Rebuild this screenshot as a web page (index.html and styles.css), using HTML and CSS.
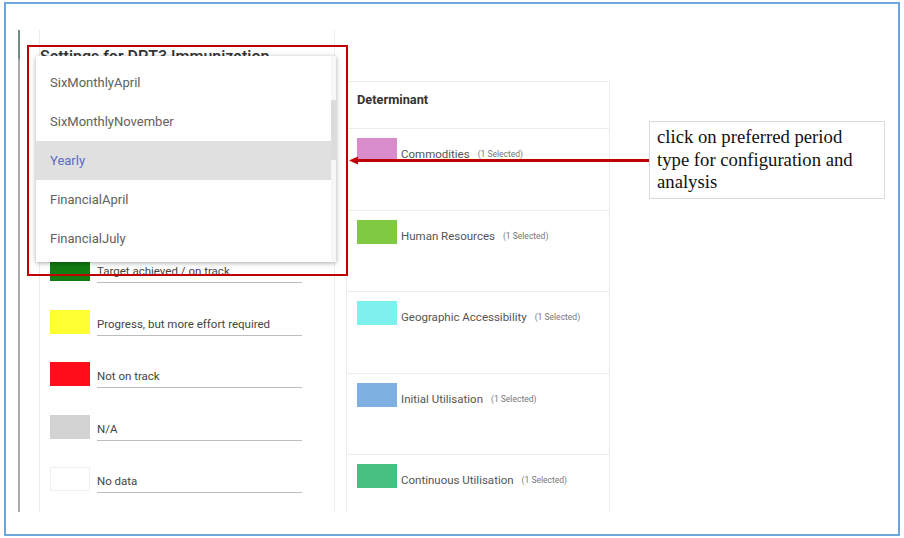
FILE: index.html
```html
<!DOCTYPE html>
<html lang="en">
<head>
<meta charset="utf-8">
<title>Period type selection</title>
<link rel="stylesheet" href="styles.css">
</head>
<body>
<div class="frame">
  <div class="screen">
    <div class="edge"></div>
    <div class="card">
      <h2 class="title">Settings for DPT3 Immunization</h2>
      <div class="legend">
        <div class="legend-row"><span class="swatch sw-green"></span><span class="legend-label">Target achieved / on track</span></div>
        <div class="legend-row"><span class="swatch sw-yellow"></span><span class="legend-label">Progress, but more effort required</span></div>
        <div class="legend-row"><span class="swatch sw-red"></span><span class="legend-label">Not on track</span></div>
        <div class="legend-row"><span class="swatch sw-gray"></span><span class="legend-label">N/A</span></div>
        <div class="legend-row"><span class="swatch sw-white"></span><span class="legend-label">No data</span></div>
      </div>
    </div>
    <div class="table">
      <div class="thead">Determinant</div>
      <div class="trow"><div class="cell"><span class="swatch sw-pink"></span><span class="det-label">Commodities</span><span class="sel">(1 Selected)</span></div></div>
      <div class="trow"><div class="cell"><span class="swatch sw-lime"></span><span class="det-label">Human Resources</span><span class="sel">(1 Selected)</span></div></div>
      <div class="trow"><div class="cell"><span class="swatch sw-cyan"></span><span class="det-label">Geographic Accessibility</span><span class="sel">(1 Selected)</span></div></div>
      <div class="trow"><div class="cell"><span class="swatch sw-blue"></span><span class="det-label">Initial Utilisation</span><span class="sel">(1 Selected)</span></div></div>
      <div class="trow"><div class="cell"><span class="swatch sw-teal"></span><span class="det-label">Continuous Utilisation</span><span class="sel">(1 Selected)</span></div></div>
    </div>
  </div>

  <div class="menu">
    <ul class="menu-list">
      <li class="menu-item">SixMonthlyApril</li>
      <li class="menu-item">SixMonthlyNovember</li>
      <li class="menu-item is-active">Yearly</li>
      <li class="menu-item">FinancialApril</li>
      <li class="menu-item">FinancialJuly</li>
    </ul>
    <div class="scroll-track"><div class="scroll-thumb"></div></div>
  </div>

  <div class="redbox"></div>

  <svg class="arrow" width="302" height="10" viewBox="0 0 302 10">
    <line x1="8" y1="4.5" x2="302" y2="4.5" stroke="#c00000" stroke-width="3"/>
    <polygon points="0,4.5 9,0.5 9,8.5" fill="#c00000"/>
  </svg>

  <div class="callout">click on preferred period<br>type for configuration and<br>analysis</div>
</div>
</body>
</html>
```
FILE: styles.css
```css
* { box-sizing: border-box; }
html, body { margin: 0; padding: 0; background: #fff; }
body { font-family: Roboto, "Noto Sans", sans-serif; }

.frame {
  position: relative;
  margin: 2px 0 0 4px;
  width: 896px;
  height: 534px;
  border: 2px solid #6fa6db;
  overflow: hidden;
}

.screen {
  display: flex;
  align-items: flex-start;
  margin: 26px 0 0 12px;
  height: 482px;
}

.edge {
  width: 2px;
  height: 482px;
  background: linear-gradient(#6e8f7c 0, #6e8f7c 28px, #aaa 30px, #aaa 100%);
}

.card {
  margin-left: 19px;
  width: 296px;
  height: 482px;
  border-left: 1px solid #ececec;
  border-right: 1px solid #ececec;
  padding: 17px 0 0 0;
}

.title {
  margin: 0;
  font-size: 16px;
  line-height: 20px;
  font-weight: 500;
  color: #333;
  white-space: nowrap;
}

.legend { margin-top: 190px; padding-left: 10px; }

.legend-row {
  display: flex;
  align-items: flex-start;
  gap: 7px;
  height: 52.5px;
}

.swatch {
  display: block;
  flex: none;
  width: 40px;
  height: 24px;
}

.legend-label {
  width: 205px;
  padding: 6px 0 3px;
  line-height: 16px;
  font-size: 11.5px;
  color: #444;
  border-bottom: 1px solid #bdbdbd;
  white-space: nowrap;
}

.sw-green { background: #107c12; }
.sw-yellow { background: #ffff33; }
.sw-red { background: #ff0d1a; }
.sw-gray { background: #d3d3d3; }
.sw-white { background: #fff; border: 1px solid #efefef; }
.sw-pink { background: #d98ccb; }
.sw-lime { background: #80c942; }
.sw-cyan { background: #7ef0ee; }
.sw-blue { background: #7fb0e2; }
.sw-teal { background: #47bf80; }

.table {
  margin: 51px 0 0 11px;
  width: 264px;
  height: 431px;
  border: 1px solid #ececec;
  border-bottom: none;
  overflow: hidden;
}

.thead {
  height: 47px;
  border-bottom: 1px solid #ececec;
  padding: 10px 0 0 10px;
  font-size: 12.8px;
  line-height: 16px;
  font-weight: 700;
  color: #333;
}

.trow {
  height: 81.5px;
  border-bottom: 1px solid #ececec;
  padding: 9px 0 0 10px;
}

.cell {
  display: flex;
  align-items: flex-end;
  height: 24px;
  white-space: nowrap;
}

.det-label {
  margin-left: 4px;
  font-size: 11.5px;
  line-height: 16px;
  color: #555;
}

.sel {
  margin-left: 8px;
  font-size: 8.5px;
  line-height: 16px;
  color: #777;
}

.menu {
  position: absolute;
  left: 30px;
  top: 52px;
  width: 300px;
  height: 206px;
  display: flex;
  background: #fff;
  box-shadow: 0 1px 6px rgba(0,0,0,0.22), 0 1px 3px rgba(0,0,0,0.14);
  overflow: hidden;
}

.menu-list {
  flex: 1;
  list-style: none;
  margin: 0;
  padding: 6.5px 0 0;
}

.menu-item {
  height: 39px;
  line-height: 39px;
  padding-left: 14px;
  font-size: 13px;
  color: #616161;
}

.menu-item.is-active {
  background: #e0e0e0;
  color: #5c6bc0;
}

.scroll-track {
  width: 5px;
  background: #f7f7f7;
}

.scroll-thumb {
  margin-top: 44px;
  height: 60px;
  background: #dcdcdc;
}

.redbox {
  position: absolute;
  left: 21px;
  top: 41px;
  width: 321px;
  height: 231px;
  border: 2px solid #c00000;
}

.arrow {
  position: absolute;
  left: 343px;
  top: 152px;
  display: block;
}

.callout {
  position: absolute;
  left: 643px;
  top: 117px;
  width: 236px;
  height: 78px;
  border: 1px solid #d9d9d9;
  padding: 4px 6px 3px 7px;
  font-family: "Liberation Serif", "Times New Roman", serif;
  font-size: 18.7px;
  line-height: 22.5px;
  color: #111;
  white-space: nowrap;
  background: #fff;
}
```
